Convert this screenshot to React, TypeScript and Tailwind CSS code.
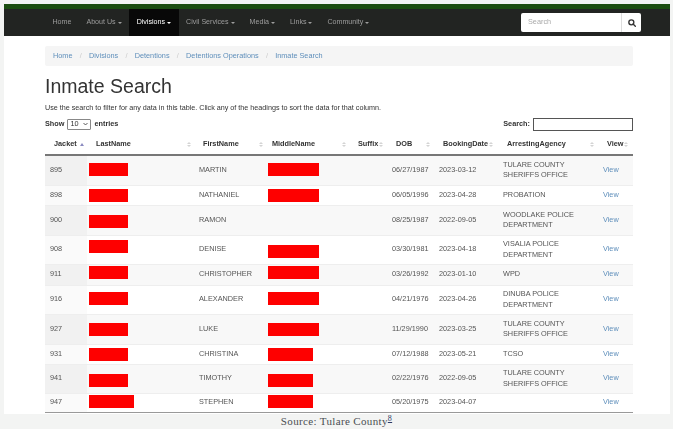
const nav: [string, boolean, boolean][] = [
  ["Home", false, false],
  ["About Us", true, false],
  ["Divisions", true, true],
  ["Civil Services", true, false],
  ["Media", true, false],
  ["Links", true, false],
  ["Community", true, false],
];
const crumbs = ["Home", "Divisions", "Detentions", "Detentions Operations", "Inmate Search"];

const heads = [
  { t: "Jacket", w: "w-[42px]", sort: "▲", r: "right-[3px]" },
  { t: "LastName", w: "w-[107px]", r: "right-[3px]" },
  { t: "FirstName", w: "w-[69px]", r: "right-[0px]" },
  { t: "MiddleName", w: "w-[86px]", r: "right-[3px]" },
  { t: "Suffix", w: "w-[38px]", r: "right-[4px]" },
  { t: "DOB", w: "w-[47px]", r: "right-[4px]" },
  { t: "BookingDate", w: "w-[64px]", r: "right-[5px]" },
  { t: "ArrestingAgency", w: "w-[100px]", r: "right-[4px]" },
  { t: "View", w: "w-[35px]", r: "right-[5px]" },
];

type Row = {
  j: string; first: string; dob: string; date: string; agency: string[];
  h: string; lastTop: string; midTop: string; lastW: string; midW: string; noMid?: boolean;
};
const rows: Row[] = [
  { j: "895", first: "MARTIN", dob: "06/27/1987", date: "2023-03-12", agency: ["TULARE COUNTY", "SHERIFFS OFFICE"], h: "h-[30px]", lastTop: "mt-[7px]", midTop: "mt-[7px]", lastW: "w-[39px]", midW: "w-[51px]" },
  { j: "898", first: "NATHANIEL", dob: "06/05/1996", date: "2023-04-28", agency: ["PROBATION"], h: "h-[20px]", lastTop: "mt-[3px]", midTop: "mt-[3px]", lastW: "w-[39px]", midW: "w-[51px]" },
  { j: "900", first: "RAMON", dob: "08/25/1987", date: "2022-09-05", agency: ["WOODLAKE POLICE", "DEPARTMENT"], h: "h-[30px]", lastTop: "mt-[9px]", midTop: "mt-[9px]", lastW: "w-[39px]", midW: "w-[51px]", noMid: true },
  { j: "908", first: "DENISE", dob: "03/30/1981", date: "2023-04-18", agency: ["VISALIA POLICE", "DEPARTMENT"], h: "h-[29px]", lastTop: "mt-[4px]", midTop: "mt-[9px]", lastW: "w-[39px]", midW: "w-[51px]" },
  { j: "911", first: "CHRISTOPHER", dob: "03/26/1992", date: "2023-01-10", agency: ["WPD"], h: "h-[21px]", lastTop: "mt-[1px]", midTop: "mt-[1px]", lastW: "w-[39px]", midW: "w-[51px]" },
  { j: "916", first: "ALEXANDER", dob: "04/21/1976", date: "2023-04-26", agency: ["DINUBA POLICE", "DEPARTMENT"], h: "h-[29px]", lastTop: "mt-[6px]", midTop: "mt-[6px]", lastW: "w-[39px]", midW: "w-[51px]" },
  { j: "927", first: "LUKE", dob: "11/29/1990", date: "2023-03-25", agency: ["TULARE COUNTY", "SHERIFFS OFFICE"], h: "h-[30px]", lastTop: "mt-[8px]", midTop: "mt-[8px]", lastW: "w-[39px]", midW: "w-[51px]" },
  { j: "931", first: "CHRISTINA", dob: "07/12/1988", date: "2023-05-21", agency: ["TCSO"], h: "h-[20px]", lastTop: "mt-[3px]", midTop: "mt-[3px]", lastW: "w-[39px]", midW: "w-[45px]" },
  { j: "941", first: "TIMOTHY", dob: "02/22/1976", date: "2022-09-05", agency: ["TULARE COUNTY", "SHERIFFS OFFICE"], h: "h-[29px]", lastTop: "mt-[9px]", midTop: "mt-[9px]", lastW: "w-[39px]", midW: "w-[45px]" },
  { j: "947", first: "STEPHEN", dob: "05/20/1975", date: "2023-04-07", agency: [], h: "h-[19px]", lastTop: "mt-[1px]", midTop: "mt-[1px]", lastW: "w-[45px]", midW: "w-[45px]" },
];

function Caret({ color }: { color: string }) {
  return <span className={`inline-block ml-[2px] align-middle w-0 h-0 border-x-[2px] border-x-transparent border-t-[2px] ${color}`} />;
}

function SortIcon({ up, r }: { up?: boolean; r: string }) {
  return up ? (
    <span className={`absolute ${r} top-[10px] w-0 h-0 border-x-[2px] border-x-transparent border-b-[3px] border-b-[#8a8ac0]`} />
  ) : (
    <span className={`absolute ${r} top-[9px] flex flex-col gap-[1px]`}>
      <span className="w-0 h-0 border-x-[2px] border-x-transparent border-b-[2.5px] border-b-[#d4d4d4]" />
      <span className="w-0 h-0 border-x-[2px] border-x-transparent border-t-[2.5px] border-t-[#d4d4d4]" />
    </span>
  );
}

export default function App() {
  return (
    <div className="w-[673px] h-[429px] overflow-hidden bg-[#f3f4f3] pt-1 pl-1 font-['Liberation_Sans',Arial,sans-serif]">
      <div className="w-[666px] h-[410px] bg-white blur-[0.5px]">
        <div className="h-[5px] bg-[#1b4d10]" />
        <div className="h-[27px] bg-[#222422] flex items-center pl-[41px] pr-[29px]">
          <div className="flex h-full">
            {nav.map(([t, caret, active]) => (
              <div key={t} className={`flex items-center px-[7.5px] text-[7.1px] ${active ? "bg-[#080808] text-white" : "text-[#9d9d9d]"}`}>
                {t}
                {caret && <Caret color={active ? "border-t-white" : "border-t-[#9d9d9d]"} />}
              </div>
            ))}
          </div>
          <div className="ml-auto flex h-[19px] w-[120px] bg-white rounded-[2px]">
            <div className="w-[101px] pl-[7px] flex items-center text-[7.3px] text-[#aaaaaa] border-r border-[#dddddd]">Search</div>
            <div className="flex-1 flex items-center justify-center">
              <svg width="8" height="8" viewBox="0 0 24 24" fill="none" stroke="#333" strokeWidth="4" strokeLinecap="round">
                <circle cx="10" cy="10" r="7.5" />
                <path d="M16 16l6 6" />
              </svg>
            </div>
          </div>
        </div>

        <div className="ml-[41px] w-[588px] pt-[10px]">
          <div className="h-[20px] bg-[#f5f5f5] rounded-[2px] flex items-center pl-2 text-[7.3px] text-[#5f8fbb]">
            {crumbs.map((c, i) => (
              <span key={c} className="flex items-center">
                {i > 0 && <span className="text-[#cccccc] w-[16.5px] text-center">/</span>}
                {c}
              </span>
            ))}
          </div>
          <h1 className="mt-[8px] h-[24px] leading-[24px] text-[19.5px] font-normal text-[#333333]">Inmate Search</h1>
          <p className="mt-[4px] h-[13px] leading-[12px] text-[7.2px] text-[#333333]">
            Use the search to filter for any data in this table. Click any of the headings to sort the data for that column.
          </p>
          <div className="h-[18px] flex items-center justify-between text-[7.3px] font-bold text-[#333333]">
            <div className="flex items-center">
              Show
              <span className="mx-[3px] w-[24px] h-[11px] border border-[#888888] rounded-[1px] flex items-center justify-between px-[2px] font-normal bg-white">
                10
                <svg width="5" height="4" viewBox="0 0 10 8" fill="none" stroke="#333" strokeWidth="1.6"><path d="M1 2l4 4 4-4" /></svg>
              </span>
              entries
            </div>
            <div className="flex items-center">
              Search:
              <span className="ml-[3px] w-[100px] h-[13px] border border-[#555555] bg-white block" />
            </div>
          </div>

          <table className="table-fixed w-[588px] border-collapse text-[7.3px] text-[#555555]">
            <colgroup>
              {heads.map((h) => <col key={h.t} className={h.w} />)}
            </colgroup>
            <thead>
              <tr className="h-[22px] border-b-2 border-[#777777]">
                {heads.map((h) => (
                  <th key={h.t} className="relative pl-[9px] pr-0 pt-[2px] text-left font-bold text-[#333333] whitespace-nowrap">
                    {h.t}
                    <SortIcon up={!!h.sort} r={h.r} />
                  </th>
                ))}
              </tr>
            </thead>
            <tbody>
              {rows.map((r, i) => {
                const odd = i % 2 === 0;
                return (
                  <tr key={r.j} className={`${r.h} border-t border-[#eeeeee] ${odd ? "bg-[#f8f8f8]" : "bg-white"}`}>
                    <td className={`pl-[5px] ${odd ? "bg-[#f1f1f1]" : "bg-[#fafafa]"}`}>{r.j}</td>
                    <td className="align-top pl-[2px]">
                      <div className={`${r.lastTop} ${r.lastW} h-[13px] bg-[#fe0000]`} />
                    </td>
                    <td className="pl-[5px] whitespace-nowrap">{r.first}</td>
                    <td className="align-top pl-[5px]">
                      {!r.noMid && <div className={`${r.midTop} ${r.midW} h-[13px] bg-[#fe0000]`} />}
                    </td>
                    <td />
                    <td className="pl-[5px] whitespace-nowrap">{r.dob}</td>
                    <td className="pl-[5px] whitespace-nowrap">{r.date}</td>
                    <td className="pl-[5px] whitespace-nowrap leading-[10.5px]">
                      {r.agency.map((a) => <div key={a}>{a}</div>)}
                    </td>
                    <td className="pl-[5px] text-[#5f8fbb]">View</td>
                  </tr>
                );
              })}
            </tbody>
            <tfoot>
              <tr className="h-[1px] border-t-[1.5px] border-[#999999]"><td colSpan={9} /></tr>
            </tfoot>
          </table>
        </div>
      </div>
      <div className="w-[665px] mt-[1px] text-center font-['Liberation_Serif',serif] font-normal text-[11px] leading-[13px] tracking-[0.35px] text-[#4a4e52]">
        Source: Tulare County<sup className="text-[8px] underline text-[#2b3a67] leading-none">8</sup>
      </div>
    </div>
  );
}
